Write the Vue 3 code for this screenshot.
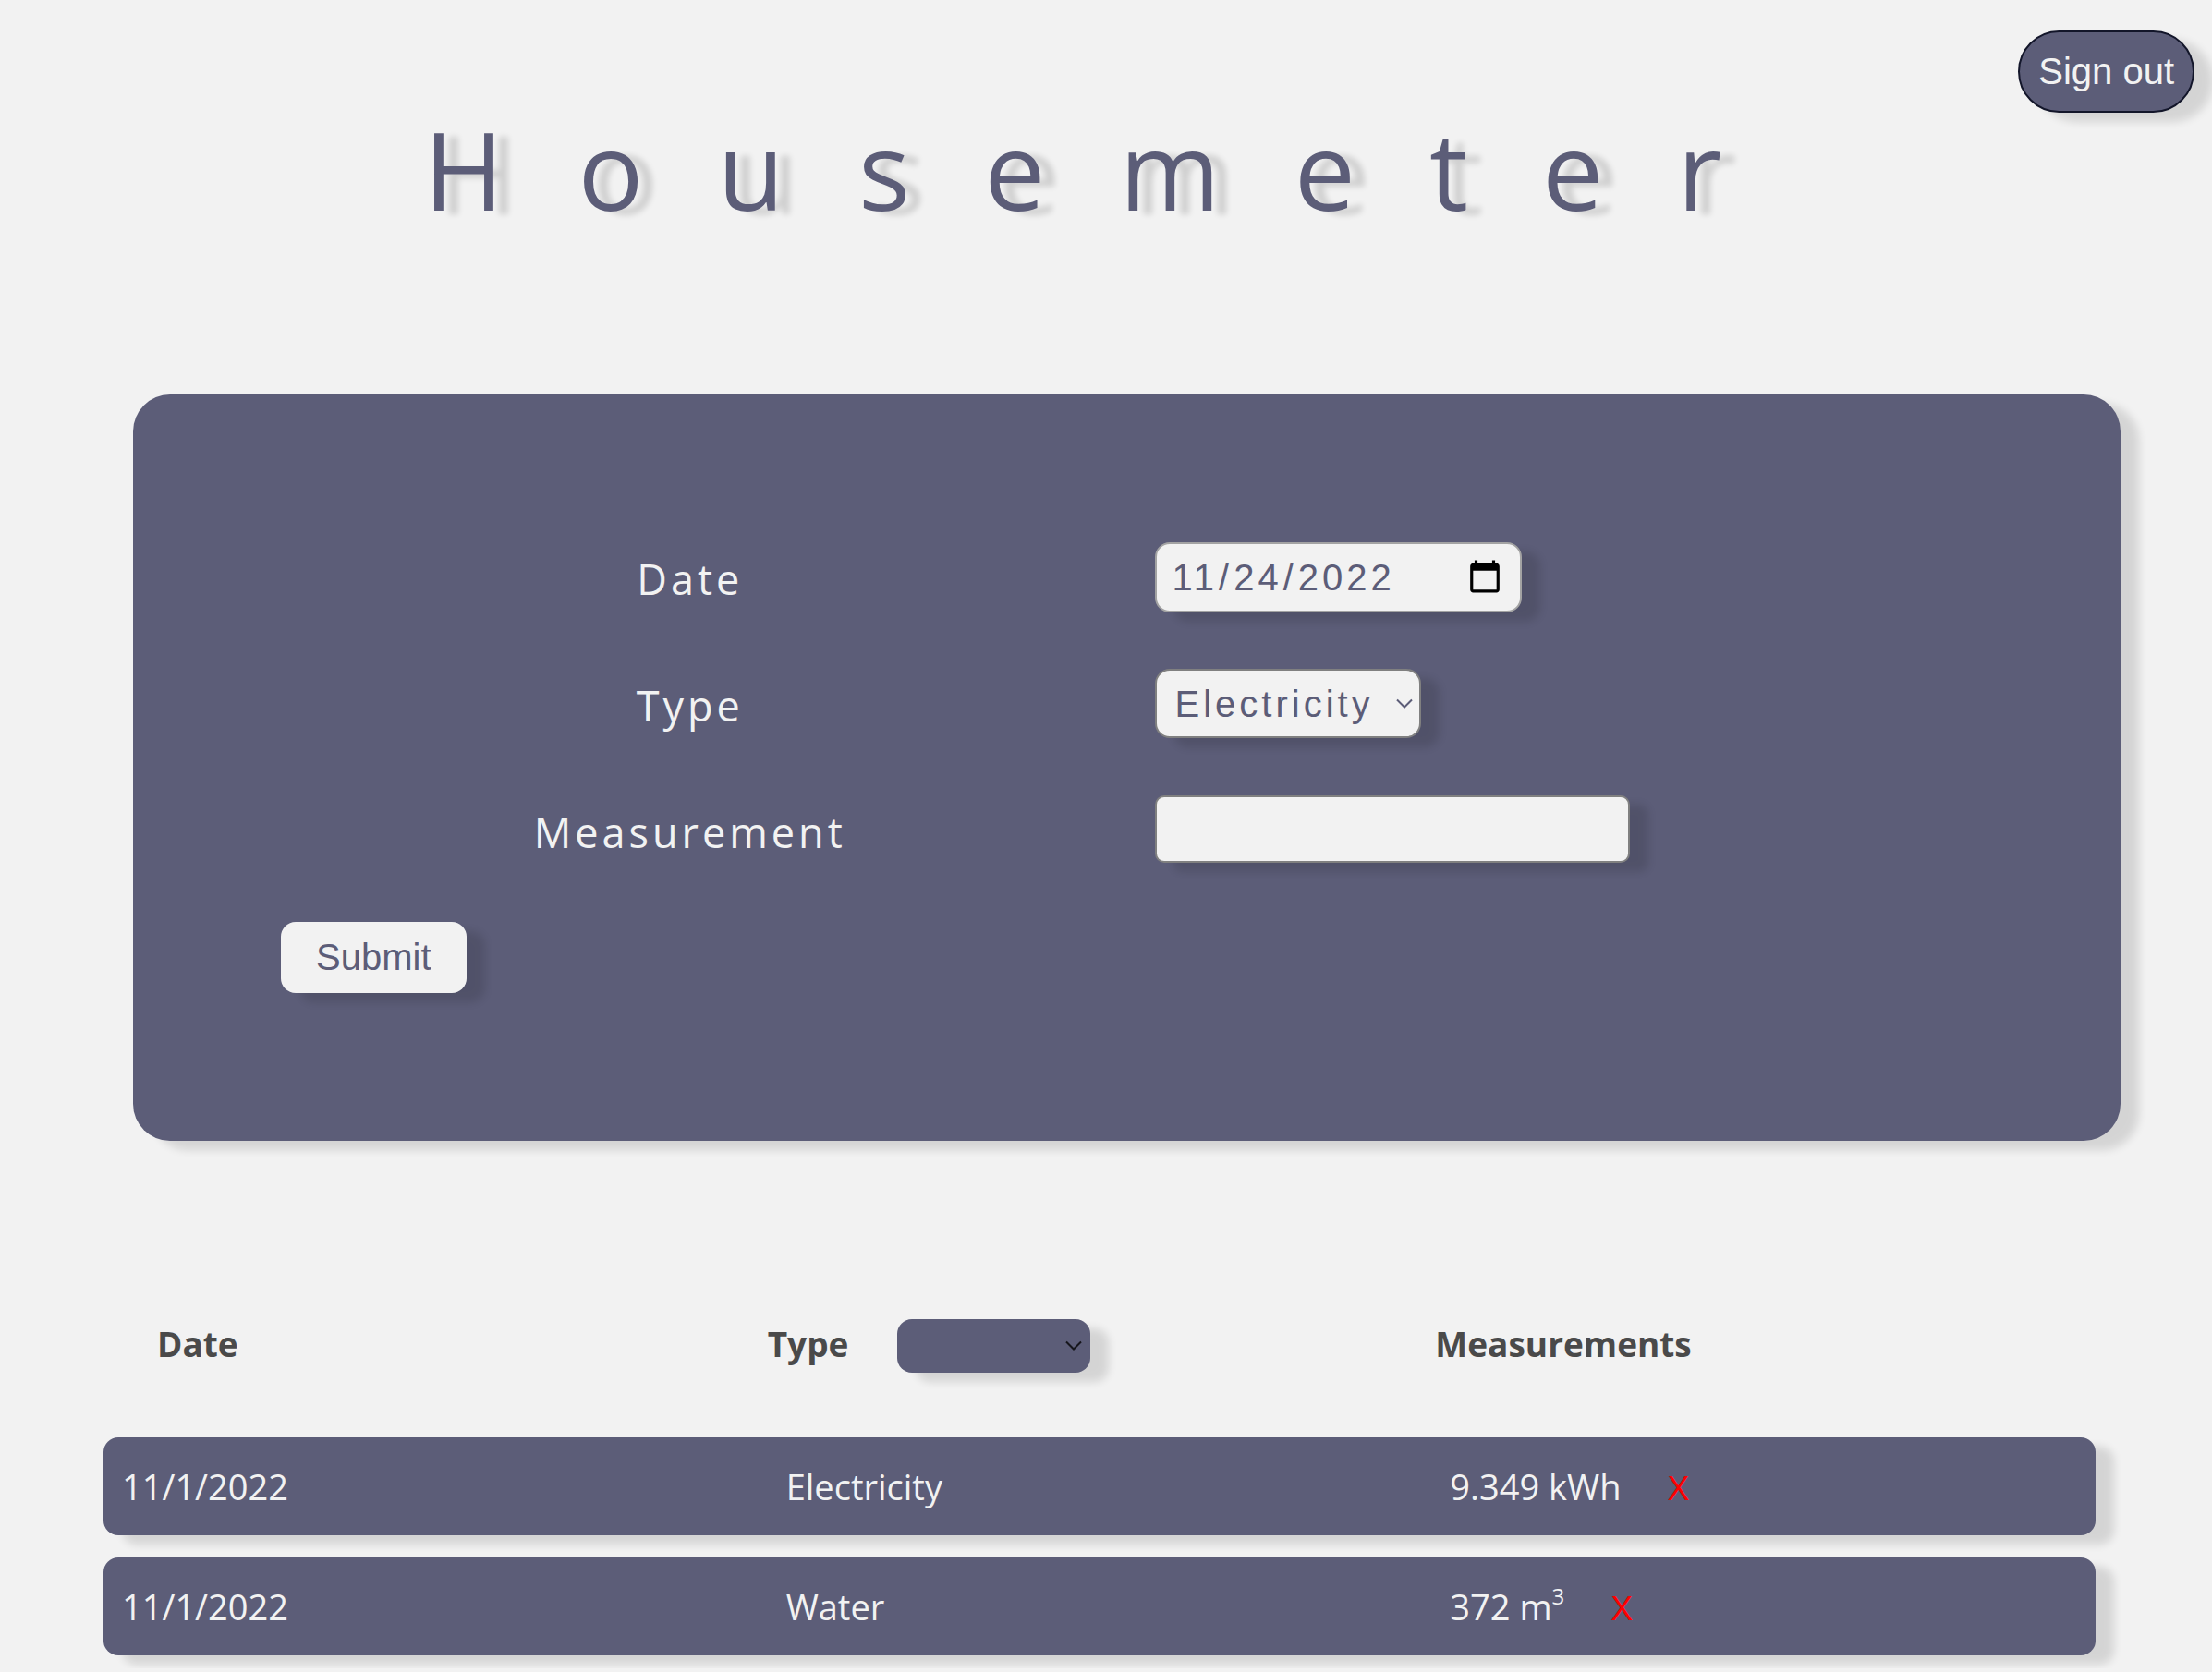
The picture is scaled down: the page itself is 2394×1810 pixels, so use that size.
<script setup>
import { ref } from 'vue'

const date = ref('2022-11-24')
const type = ref('Electricity')
const measurement = ref('')
const filter = ref('')
const types = ['Electricity', 'Water']

const readings = ref([
  { id: 1, date: '11/1/2022', type: 'Electricity', value: '9.349', unit: 'kWh', power: '' },
  { id: 2, date: '11/1/2022', type: 'Water', value: '372', unit: 'm', power: '3' }
])

function remove(id) {
  readings.value = readings.value.filter((r) => r.id !== id)
}
</script>

<template>
  <div class="page">
    <header class="top">
      <button type="button" class="sign-out">Sign out</button>
    </header>
    <h1 class="title">Housemeter</h1>

    <form class="card" @submit.prevent>
      <label class="label" for="date">Date</label>
      <div class="field">
        <input id="date" v-model="date" class="control date" type="date" />
      </div>

      <label class="label" for="type">Type</label>
      <div class="field">
        <div class="select-wrap">
          <select id="type" v-model="type" class="control type">
            <option v-for="t in types" :key="t">{{ t }}</option>
          </select>
          <svg class="chevron" viewBox="0 0 18 12" aria-hidden="true">
            <path d="M1 1.5 L9 9.5 L17 1.5" />
          </svg>
        </div>
      </div>

      <label class="label" for="measurement">Measurement</label>
      <div class="field">
        <input id="measurement" v-model="measurement" class="control measurement" type="text" />
      </div>

      <div class="actions">
        <button type="submit" class="submit">Submit</button>
      </div>
    </form>

    <table class="readings">
      <thead>
        <tr class="head">
          <th class="head-date">Date</th>
          <th class="head-type">
            <label for="filter">Type</label>
            <div class="select-wrap">
              <select id="filter" v-model="filter" class="filter">
                <option value=""></option>
                <option v-for="t in types" :key="t">{{ t }}</option>
              </select>
              <svg class="chevron dark" viewBox="0 0 18 12" aria-hidden="true">
                <path d="M1 1.5 L9 9.5 L17 1.5" />
              </svg>
            </div>
          </th>
          <th class="head-amount">Measurements</th>
        </tr>
      </thead>
      <tbody>
        <tr v-for="r in readings" :key="r.id" class="row">
          <td>{{ r.date }}</td>
          <td>{{ r.type }}</td>
          <td class="amount">
            <span>{{ r.value }} {{ r.unit }}<sup v-if="r.power">{{ r.power }}</sup></span>
            <button type="button" class="remove" @click="remove(r.id)">X</button>
          </td>
        </tr>
      </tbody>
    </table>
  </div>
</template>

<style>
body {
  background: #f2f2f2;
}
</style>

<style scoped>
.page {
  --ink: #5c5d78;
  --paper: #f2f2f2;
  --shadow: 20px 10px 10px rgba(0, 0, 0, 0.12);
  padding-bottom: 14px;
  background: var(--paper);
  color: var(--paper);
  font-family: 'Open Sans', 'Noto Sans', sans-serif;
}

button,
input,
select {
  box-sizing: border-box;
  margin: 0;
  font-family: 'Liberation Sans', Arial, sans-serif;
  font-size: 40px;
}

.top {
  display: flex;
  justify-content: flex-end;
  padding: 33px 19px 0;
}

.sign-out {
  padding: 20px;
  border: 2px solid #13162a;
  border-radius: 45px;
  background: var(--ink);
  color: var(--paper);
  line-height: 45px;
  box-shadow: var(--shadow);
}

.title {
  margin: 0;
  padding-left: 8px;
  color: var(--ink);
  font-size: 118px;
  font-weight: 500;
  line-height: 122px;
  letter-spacing: 80px;
  text-align: center;
  text-shadow: 16px 4px 6px rgba(0, 0, 0, 0.14);
}

.card {
  display: grid;
  grid-template-columns: 1fr 1fr;
  gap: 60px;
  margin: 183px 99px 0 144px;
  padding: 160px;
  border-radius: 40px;
  background: var(--ink);
  box-shadow: var(--shadow);
}

.label {
  padding-top: 4px;
  font-size: 45px;
  line-height: 72px;
  letter-spacing: 4px;
  text-align: center;
}

.field {
  display: flex;
  align-items: flex-start;
  height: 77px;
}

.control {
  border: 2px solid #808080;
  border-radius: 16px;
  background: var(--paper);
  color: var(--ink);
  letter-spacing: 4px;
  box-shadow: var(--shadow);
}

.date {
  width: 397px;
  height: 76px;
  padding: 0 16px;
  border-color: #a3a3a3;
}

.type {
  width: 288px;
  height: 75px;
  padding: 0 20px;
}

.measurement {
  width: 514px;
  height: 73px;
  padding: 0 16px;
  border-radius: 10px;
}

.select-wrap {
  display: flex;
  position: relative;
}

select {
  appearance: none;
}

.chevron {
  position: absolute;
  top: 50%;
  right: 9px;
  width: 18px;
  height: 12px;
  margin-top: -6px;
  fill: none;
  stroke: #5c5d78;
  stroke-width: 2;
  pointer-events: none;
}

.chevron.dark {
  stroke: #16161c;
}

.submit {
  padding: 16px 38px;
  border: 0;
  border-radius: 16px;
  background: var(--paper);
  color: var(--ink);
  line-height: 45px;
  box-shadow: var(--shadow);
}

.readings {
  display: block;
  margin: 193px 126px 0 112px;
  font-size: 38px;
}

.readings thead,
.readings tbody {
  display: block;
}

.head,
.row {
  display: grid;
  grid-template-columns: repeat(3, 1fr);
}

.head {
  margin-bottom: 70px;
  color: #4a4a4a;
  font-size: 37px;
  line-height: 53px;
}

.head th {
  padding: 0;
  text-align: left;
}

.head .head-date {
  padding-left: 58px;
}

.head .head-amount {
  padding-left: 4px;
}

.head-type {
  display: flex;
  gap: 53px;
}

.filter {
  width: 209px;
  height: 58px;
  padding: 0 16px;
  border: 0;
  border-radius: 16px;
  background: var(--ink);
  color: var(--paper);
  box-shadow: var(--shadow);
}

.row {
  align-items: center;
  border-radius: 16px;
  background: var(--ink);
  line-height: 106px;
  box-shadow: var(--shadow);
}

.row + .row {
  margin-top: 24px;
}

.row td {
  padding: 0 20px;
}

.amount {
  display: flex;
  align-items: baseline;
  gap: 50px;
}

sup {
  font-size: 24px;
  font-weight: 500;
  line-height: 0;
  vertical-align: 17px;
}

.remove {
  padding: 0;
  border: 0;
  background: none;
  color: #ff0000;
  font-size: 36px;
  line-height: 45px;
}
</style>
